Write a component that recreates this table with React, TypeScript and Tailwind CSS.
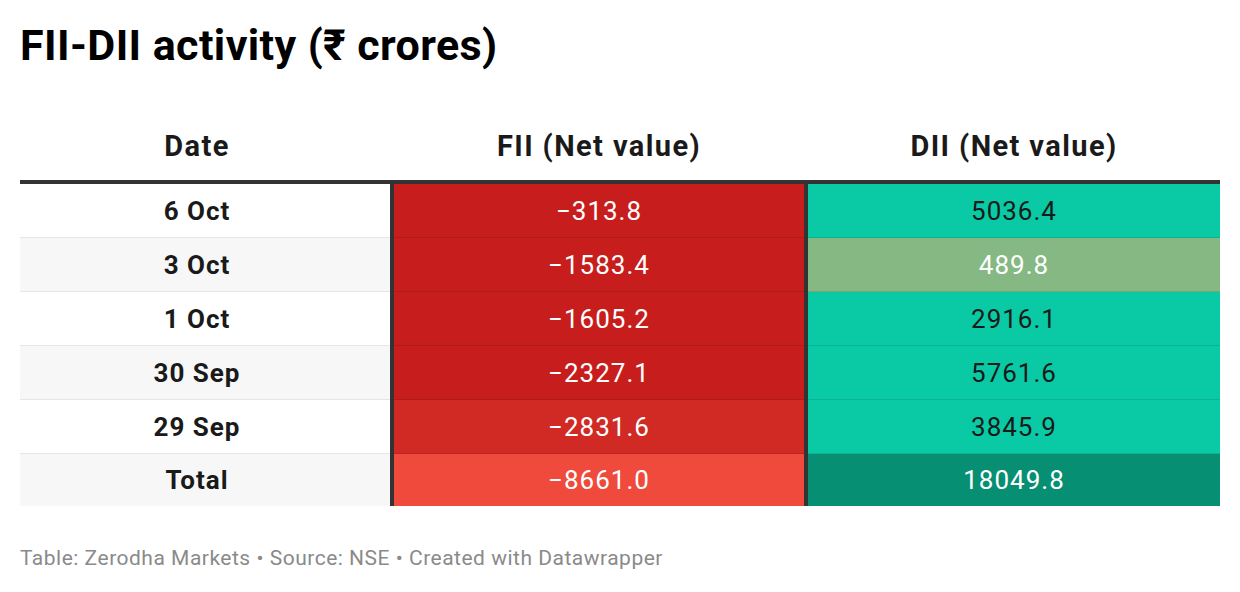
import React from "react";

interface Row {
  date: string;
  fii: string;
  dii: string;
  fiiBg: string;
  diiBg: string;
  diiText: string;
  total?: boolean;
}

const rows: Row[] = [
  { date: "6 Oct", fii: "−313.8", dii: "5036.4", fiiBg: "bg-[#c71e1d]", diiBg: "bg-[#09caa4]", diiText: "text-[#1a1a1a]" },
  { date: "3 Oct", fii: "−1583.4", dii: "489.8", fiiBg: "bg-[#c71e1d]", diiBg: "bg-[#86b884]", diiText: "text-white" },
  { date: "1 Oct", fii: "−1605.2", dii: "2916.1", fiiBg: "bg-[#c71e1d]", diiBg: "bg-[#09caa4]", diiText: "text-[#1a1a1a]" },
  { date: "30 Sep", fii: "−2327.1", dii: "5761.6", fiiBg: "bg-[#c71e1d]", diiBg: "bg-[#09caa4]", diiText: "text-[#1a1a1a]" },
  { date: "29 Sep", fii: "−2831.6", dii: "3845.9", fiiBg: "bg-[#d12a25]", diiBg: "bg-[#09caa4]", diiText: "text-[#1a1a1a]" },
  { date: "Total", fii: "−8661.0", dii: "18049.8", fiiBg: "bg-[#ef4a3c]", diiBg: "bg-[#068f72]", diiText: "text-white", total: true },
];

export default function App() {
  return (
    <div className="w-[1240px] h-[592px] bg-white px-5 pt-[19px] font-['Roboto',sans-serif]">
      <h1 className="text-[43px] leading-[52px] font-bold text-black tracking-[0.4px]">
        FII-DII activity (₹ crores)
      </h1>

      <div className="mt-[39px]">
        {/* Header */}
        <div className="flex h-[74px] pt-[2px] items-center border-b-4 border-[#333333] text-[29px] leading-[34px] font-bold text-[#1a1a1a] tracking-[1.4px]">
          <div className="w-[370px] pr-4 text-center">Date</div>
          <div className="w-[4px]" />
          <div className="w-[410px] text-center">FII (Net value)</div>
          <div className="w-[4px]" />
          <div className="flex-1 text-center">DII (Net value)</div>
        </div>

        {/* Body */}
        {rows.map((r, i) => (
          <div
            key={r.date}
            className={`flex text-[26px] leading-[30px] tracking-[1px] ${r.total ? "h-[52px]" : "h-[54px]"}`}
          >
            <div
              className={`w-[370px] pr-4 flex items-center justify-center font-bold text-[#1a1a1a] ${
                i % 2 === 1 ? "bg-[#f7f7f7]" : "bg-white"
              } ${r.total ? "" : "border-b border-[#e6e6e6]"}`}
            >
              {r.date}
            </div>
            <div className="w-[4px] bg-[#333333]" />
            <div
              className={`w-[410px] flex items-center justify-center text-white ${r.fiiBg} ${
                r.total ? "" : "border-b border-black/10"
              }`}
            >
              {r.fii}
            </div>
            <div className="w-[4px] bg-[#333333]" />
            <div
              className={`flex-1 flex items-center justify-center ${r.diiText} ${r.diiBg} ${
                r.total ? "" : "border-b border-black/10"
              }`}
            >
              {r.dii}
            </div>
          </div>
        ))}
      </div>

      <p className="mt-[37px] text-[21px] tracking-[0.5px] text-[#8a8a8a]">
        Table: Zerodha Markets • Source: NSE • Created with Datawrapper
      </p>
    </div>
  );
}
